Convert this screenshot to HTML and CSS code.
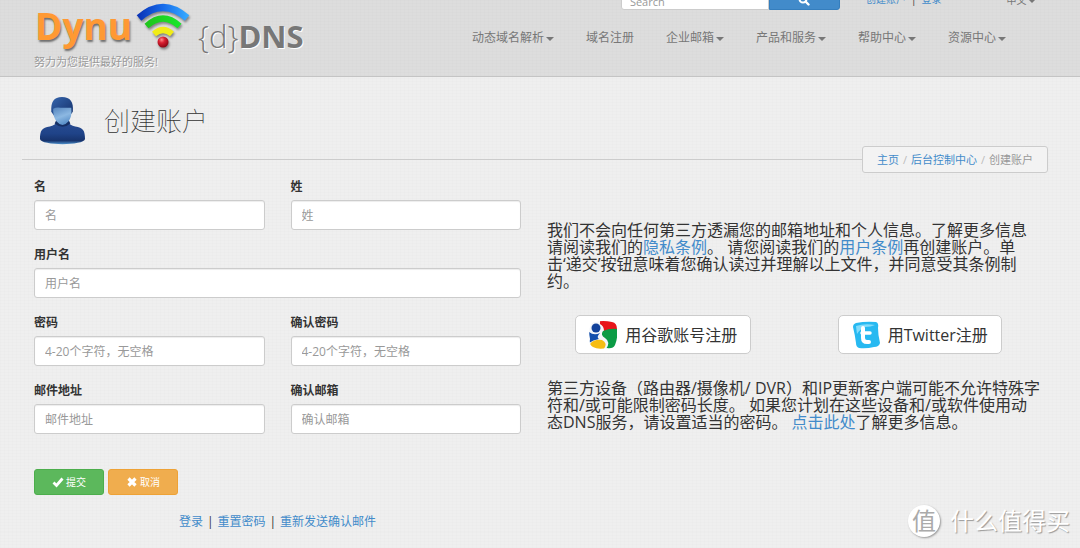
FILE: index.html
```html
<!DOCTYPE html>
<html lang="zh-CN">
<head>
<meta charset="utf-8">
<title>创建账户 - Dynu</title>
<link rel="stylesheet" href="styles.css">
</head>
<body>
<header class="site-header">
  <div class="brand">
    <a class="logo" href="#">
      <span class="logo-name">Dynu</span>
      <svg class="logo-signal" viewBox="0 0 56 48" aria-hidden="true">
        <defs>
          <linearGradient id="arcBlue"><stop offset="0" stop-color="#0b35b8"/><stop offset=".5" stop-color="#176bea"/><stop offset="1" stop-color="#36a8ff"/></linearGradient>
          <linearGradient id="arcGreen"><stop offset="0" stop-color="#20c51c"/><stop offset="1" stop-color="#19e52b"/></linearGradient>
          <radialGradient id="dotRed" cx=".38" cy=".3" r=".7"><stop offset="0" stop-color="#ff8b8b"/><stop offset=".4" stop-color="#d92032"/><stop offset="1" stop-color="#8e0714"/></radialGradient>
        </defs>
        <g fill="none">
          <path d="M4 16Q28-5 52 16" stroke="url(#arcBlue)" stroke-width="7"/>
          <path d="M11.500 24Q28 9 44.500 24" stroke="url(#arcGreen)" stroke-width="6"/>
          <path d="M19 32Q28 24 37 32" stroke="#f1ec17" stroke-width="6"/>
        </g>
        <circle cx="28" cy="40" r="5.500" fill="url(#dotRed)"/>
      </svg>
      <span class="logo-product"><span class="logo-light">{d}</span>DNS</span>
    </a>
    <div class="tagline">努力为您提供最好的服务!</div>
  </div>
  <div class="header-side">
    <div class="utility">
      <form class="search">
        <input class="search-input" type="text" placeholder="Search" aria-label="Search">
        <button class="search-button" type="button" aria-label="搜索">
          <svg class="search-icon" viewBox="0 0 12 12" aria-hidden="true"><circle cx="5" cy="5" r="3.500" fill="none" stroke="#fff" stroke-width="2"/><path d="M7.500 7.500l3 3" stroke="#fff" stroke-width="2.400" stroke-linecap="round"/></svg>
        </button>
      </form>
      <div class="account"><a href="#">创建账户</a><span class="bar">|</span><a href="#">登录</a></div>
      <a class="language" href="#">中文<span class="caret"></span></a>
    </div>
    <nav class="nav">
      <a href="#">动态域名解析<span class="caret"></span></a>
      <a href="#">域名注册</a>
      <a href="#">企业邮箱<span class="caret"></span></a>
      <a href="#">产品和服务<span class="caret"></span></a>
      <a href="#">帮助中心<span class="caret"></span></a>
      <a href="#">资源中心<span class="caret"></span></a>
    </nav>
  </div>
</header>

<div class="page-title">
  <svg class="user-icon" viewBox="0 0 48 50" aria-hidden="true">
    <defs>
      <linearGradient id="body" x1="0" y1="0" x2="0" y2="1"><stop offset="0" stop-color="#2a4d93"/><stop offset=".55" stop-color="#1f4388"/><stop offset=".85" stop-color="#17336c"/><stop offset="1" stop-color="#4f93cf"/></linearGradient>
      <linearGradient id="face" x1="0" y1="0" x2=".4" y2="1"><stop offset="0" stop-color="#5484bd"/><stop offset=".6" stop-color="#8cb8e2"/><stop offset="1" stop-color="#5d92ca"/></linearGradient>
      <linearGradient id="hair" x1="0" y1="0" x2="1" y2="1"><stop offset="0" stop-color="#3565ad"/><stop offset="1" stop-color="#142f68"/></linearGradient>
    </defs>
    <path d="M1 44C1 35 3 32 11 31C16 30 18 28 18 25H30C30 28 32 30 37 31C45 32 47 35 47 44C46 51 2 51 1 44Z" fill="url(#body)"/>
    <path d="M16 28Q24 35 32 28L30 24H18Z" fill="#162f64"/>
    <path d="M12.500 16C12 6 15 1 23.500 1S35.500 6 34.500 16L31 21H16Z" fill="url(#hair)"/>
    <path d="M14.500 13Q18 11 22 12L33 12Q34 21 30 26Q24 33 18 26Q14 21 14.500 13Z" fill="url(#face)"/>
  </svg>
  <h1>创建账户</h1>
</div>
<div class="crumb-row">
  <ol class="breadcrumb">
    <li><a href="#">主页</a></li>
    <li><a href="#">后台控制中心</a></li>
    <li>创建账户</li>
  </ol>
</div>

<main class="content">
  <form class="signup">
    <div class="fields">
      <div class="field"><label for="first">名</label><input id="first" type="text" placeholder="名"></div>
      <div class="field"><label for="last">姓</label><input id="last" type="text" placeholder="姓"></div>
      <div class="field field-wide"><label for="user">用户名</label><input id="user" type="text" placeholder="用户名"></div>
      <div class="field"><label for="pass">密码</label><input id="pass" type="password" placeholder="4-20个字符，无空格"></div>
      <div class="field"><label for="pass2">确认密码</label><input id="pass2" type="password" placeholder="4-20个字符，无空格"></div>
      <div class="field"><label for="mail">邮件地址</label><input id="mail" type="email" placeholder="邮件地址"></div>
      <div class="field"><label for="mail2">确认邮箱</label><input id="mail2" type="email" placeholder="确认邮箱"></div>
    </div>
    <div class="actions">
      <button class="btn btn-submit" type="button"><svg class="btn-icon" viewBox="0 0 12 12" aria-hidden="true"><path d="M1.500 6.500L4.500 9.500L10.500 2.500" fill="none" stroke="#fff" stroke-width="2.800"/></svg>提交</button>
      <button class="btn btn-cancel" type="button"><svg class="btn-icon" viewBox="0 0 12 12" aria-hidden="true"><path d="M2.500 2.500L9.500 9.500M9.500 2.500L2.500 9.500" stroke="#fff" stroke-width="3.200"/></svg>取消</button>
    </div>
    <div class="form-links"><a href="#">登录</a><span class="bar">|</span><a href="#">重置密码</a><span class="bar">|</span><a href="#">重新发送确认邮件</a></div>
  </form>

  <section class="info">
    <p>我们不会向任何第三方透漏您的邮箱地址和个人信息。了解更多信息<br>请阅读我们的<a href="#">隐私条例</a>。 请您阅读我们的<a href="#">用户条例</a>再创建账户。单<br>击‘递交’按钮意味着您确认读过并理解以上文件，并同意受其条例制<br>约。</p>
    <div class="social">
      <button class="social-button" type="button">
        <svg class="social-icon" viewBox="0 0 28 28" aria-hidden="true">
          <defs><clipPath id="tile"><path d="M6 1Q14-1 23 1Q28 2 28 8Q29 17 26 24Q24 28 18 27Q9 29 4 26Q0 24 1 18Q-1 8 2 4Q3 1 6 1Z"/></clipPath></defs>
          <g clip-path="url(#tile)">
            <path d="M0 0H28V28H0Z" fill="#f4f6fa"/>
            <path d="M11 0H28V10H15Q15 5 11 3Z" fill="#e8161b"/>
            <path d="M14 10Q21 7 28 8V28H17Q22 21 16 17Q11 14 14 10Z" fill="#0b9b45"/>
            <path d="M0 11Q5 15 11 12Q7 16 10 18Q4 19 0 22Z" fill="#1550ad"/>
            <ellipse cx="7" cy="7" rx="4.500" ry="4.500" fill="#12429b"/>
            <path d="M1 23Q5 18 13 19Q19 22 15 28H1Z" fill="#f6bd13"/>
          </g>
        </svg>用谷歌账号注册
      </button>
      <button class="social-button" type="button">
        <svg class="social-icon" viewBox="0 0 28 28" aria-hidden="true">
          <path d="M4 2Q14 0 24 1Q27 2 26 7Q26 14 28 22Q27 26 22 26Q14 28 7 27Q4 26 4 22Q3 14 1 6Q1 3 4 2Z" fill="#27b9f1"/>
          <path d="M4 5Q13 2 23 4Q19 6 13 6Q8 8 5 13Z" fill="#83dcfb"/>
          <path d="M11 7V17Q11 21 15 21H17" fill="none" stroke="#fff" stroke-width="4" stroke-linecap="round"/>
          <path d="M10 12H18" stroke="#fff" stroke-width="3.500" stroke-linecap="round"/>
        </svg>用Twitter注册
      </button>
    </div>
    <p>第三方设备（路由器/摄像机/ DVR）和IP更新客户端可能不允许特殊字<br>符和/或可能限制密码长度。 如果您计划在这些设备和/或软件使用动<br>态DNS服务，请设置适当的密码。 <a href="#">点击此处</a>了解更多信息。</p>
  </section>
</main>

<div class="watermark"><span class="watermark-mark">值</span>什么值得买</div>
</body>
</html>
```
FILE: styles.css
```css
* { box-sizing: border-box; }

body {
  margin: 0;
  background-color: #efefef;
  background-image:
    repeating-linear-gradient(0deg, rgba(0, 0, 0, 0.006) 0 1px, transparent 1px 3px),
    repeating-linear-gradient(90deg, rgba(0, 0, 0, 0.006) 0 1px, transparent 1px 4px);
  color: #333;
  font: 12px/20px "Open Sans", "Noto Sans CJK SC", sans-serif;
  overflow: hidden;
}

a { color: #428bca; text-decoration: none; }

input, button { font: inherit; margin: 0; }

.site-header {
  display: flex;
  justify-content: space-between;
  height: 77px;
  padding-left: 34px;
  background-color: rgba(0, 0, 0, 0.075);
  border-bottom: 1px solid #c4c4c4;
}

.logo { display: flex; height: 52px; }
.logo-name {
  margin-left: 1px;
  color: #f93;
  font-size: 37px;
  font-weight: 700;
  line-height: 52px;
  text-shadow: 1px 2px 2px rgba(0, 0, 0, 0.5);
}
.logo-signal {
  width: 56px;
  height: 48px;
  margin: 2px 0 0 3px;
  filter: drop-shadow(1px 2px 1px rgba(0, 0, 0, 0.4));
}
.logo-product {
  margin: 10px 0 0 7px;
  color: #777;
  font-size: 31px;
  font-weight: 700;
  line-height: 52px;
  text-shadow: 1px 1px 0 #fff;
}
.logo-light { font-weight: 300; }
.tagline {
  color: #999;
  font-size: 11px;
  text-shadow: 1px 1px 0 #fff;
}

.utility { display: flex; height: 22px; margin-top: -12px; }
.search { display: flex; margin-left: 149px; }
.search-input {
  width: 148px;
  padding: 5px 8px 0;
  border: 1px solid #ccc;
  border-radius: 0 0 0 3px;
  background: #fff;
  font-size: 11px;
}
.search-button {
  width: 71px;
  padding: 0;
  border: 1px solid #357ebd;
  border-radius: 0 0 3px 0;
  background: #428bca;
}
.search-icon { display: block; width: 12px; height: 12px; margin: 1px auto 0; }
.account { margin-left: 26px; font-size: 10px; line-height: 22px; }
.account .bar { margin: 0 5px; }
.language { margin-left: 65px; color: #777; font-size: 10px; line-height: 24px; }
.caret {
  display: inline-block;
  margin-left: 2px;
  border: 4px solid transparent;
  border-top-color: currentColor;
  border-bottom: 0;
  vertical-align: middle;
}
.nav { display: flex; gap: 32px; margin-top: 18px; padding-right: 74px; }
.nav a { color: #777; white-space: nowrap; }

.page-title { display: flex; align-items: center; height: 69px; padding: 18px 39px 0; }
.user-icon { width: 47px; height: 51px; }
h1 {
  margin: 0 0 0 18px;
  font-size: 26px;
  font-weight: 100;
  line-height: 40px;
}

.crumb-row { display: flex; align-items: center; margin: 0 32px 0 22px; }
.crumb-row::before { content: ""; flex: 1; height: 1px; background: #ccc; }
.breadcrumb {
  display: flex;
  margin: 0;
  padding: 3px 14px;
  border: 1px solid #ccc;
  border-radius: 3px;
  background: #f3f3f3;
  color: #999;
  font-size: 11px;
  line-height: 19px;
  list-style: none;
}
.breadcrumb li + li::before { content: "/"; padding: 0 4px; color: #bbb; }

.content {
  display: grid;
  grid-template-columns: 487fr 513fr;
  gap: 14px;
  padding: 4px 32px 0 34px;
}
.fields { display: grid; grid-template-columns: 1fr 1fr; gap: 15px 26px; }
.field { display: flex; flex-direction: column; gap: 3px; }
.field-wide { grid-column: 1 / -1; }
.field label { font-weight: 700; }
.field input {
  width: 100%;
  height: 30px;
  padding: 1px 10px 0;
  border: 1px solid #ccc;
  border-radius: 3px;
  background: #fff;
  box-shadow: inset 0 1px 1px rgba(0, 0, 0, 0.075);
}
input::placeholder { color: #999; opacity: 1; }

.actions { display: flex; gap: 4px; margin-top: 35px; }
.btn {
  display: flex;
  align-items: center;
  justify-content: center;
  gap: 2px;
  width: 70px;
  height: 26px;
  padding: 0;
  border: 1px solid;
  border-radius: 3px;
  color: #fff;
  font-size: 10px;
}
.btn-icon { width: 12px; height: 12px; }
.btn-submit { background: #5cb85c; border-color: #4cae4c; }
.btn-cancel { background: #f0ad4e; border-color: #eea236; }
.form-links { margin-top: 17px; text-align: center; }
.form-links .bar { margin: 0 4px; }

.info { padding-top: 45px; }
.info p {
  margin: 0;
  padding-left: 12px;
  font-size: 16px;
  line-height: 17px;
  white-space: nowrap;
}
.social {
  display: grid;
  grid-template-columns: 1fr 1fr;
  justify-items: center;
  margin: 25px 0 26px;
}
.social-button {
  display: flex;
  align-items: center;
  gap: 8px;
  height: 39px;
  padding: 0 13px;
  border: 1px solid #ccc;
  border-radius: 5px;
  background: #fff;
  color: #333;
  font-size: 16px;
  white-space: nowrap;
}
.social-icon { width: 28px; height: 28px; }

.watermark {
  position: absolute;
  right: 10px;
  bottom: 10px;
  display: flex;
  align-items: center;
  gap: 10px;
  color: #fff;
  font-size: 24px;
  line-height: 34px;
  text-shadow: 1px 1px 1px #999;
}
.watermark-mark {
  width: 32px;
  height: 32px;
  border-radius: 50%;
  background: #fff;
  box-shadow: 1px 1px 2px #999;
  color: #aaa;
  font-size: 24px;
  line-height: 32px;
  text-align: center;
  text-shadow: none;
}
```
